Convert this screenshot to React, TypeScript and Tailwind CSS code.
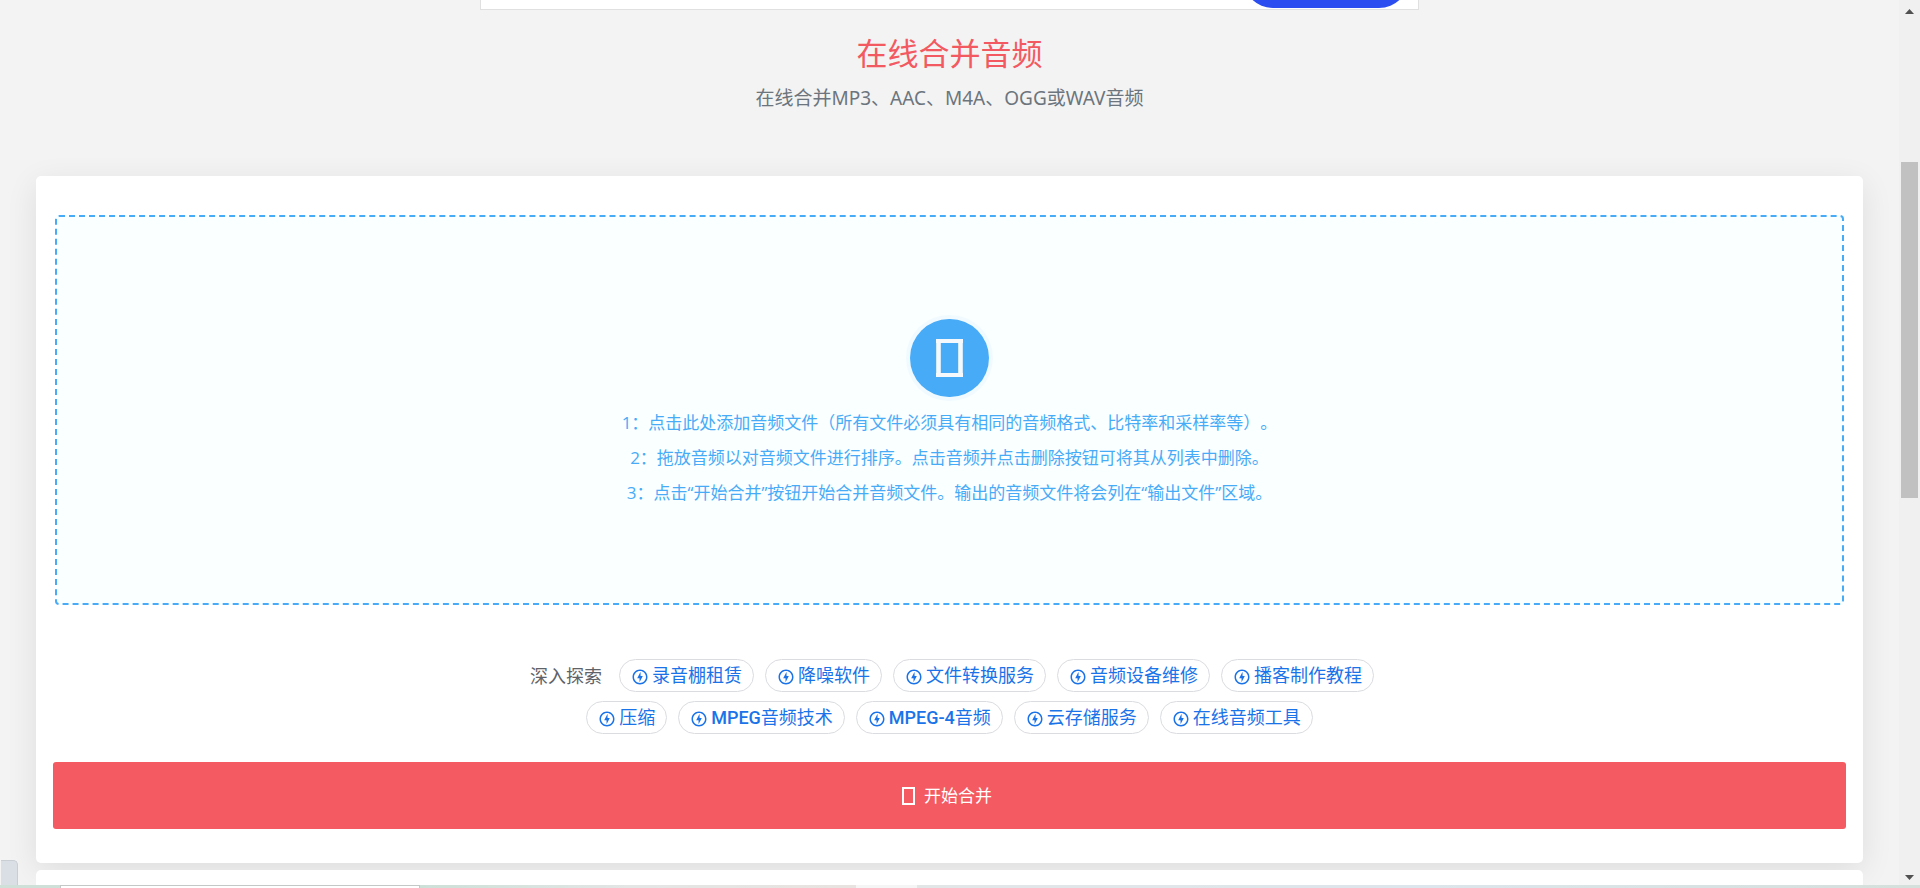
interface Topic {
  id: string;
  latin?: string;
  label: string;
}

const topicRows: Topic[][] = [
  [
    { id: "studio", label: "录音棚租赁" },
    { id: "denoise", label: "降噪软件" },
    { id: "convert", label: "文件转换服务" },
    { id: "repair", label: "音频设备维修" },
    { id: "podcast", label: "播客制作教程" },
  ],
  [
    { id: "compress", label: "压缩" },
    { id: "mpeg", latin: "MPEG", label: "音频技术" },
    { id: "mpeg4", latin: "MPEG-4", label: "音频" },
    { id: "cloud", label: "云存储服务" },
    { id: "tools", label: "在线音频工具" },
  ],
];

const steps = [
  "1：点击此处添加音频文件（所有文件必须具有相同的音频格式、比特率和采样率等）。",
  "2：拖放音频以对音频文件进行排序。点击音频并点击删除按钮可将其从列表中删除。",
  "3：点击“开始合并”按钮开始合并音频文件。输出的音频文件将会列在“输出文件”区域。",
];

function BoltIcon() {
  return (
    <svg viewBox="0 0 24 24" className="mt-0.5 h-[18px] w-[18px] shrink-0 fill-current" aria-hidden="true">
      <path d="M12 2.02c-5.51 0-9.98 4.47-9.98 9.98s4.47 9.98 9.98 9.98 9.98-4.47 9.98-9.98S17.51 2.02 12 2.02zm0 17.96c-4.4 0-7.98-3.58-7.98-7.98S7.6 4.02 12 4.02 19.98 7.6 19.98 12 16.4 19.98 12 19.98zM12.75 5l-4.5 8.5h3.14V19l4.36-8.5h-3z" />
    </svg>
  );
}

function TopicChip({ topic }: { topic: Topic }) {
  return (
    <a
      href={`#${topic.id}`}
      className="flex h-[33px] items-center gap-[3px] rounded-full border border-[#dadce0] px-[11px] font-['Roboto','Noto_Sans_CJK_SC',sans-serif] text-lg text-[#1a73e8]"
    >
      <BoltIcon />
      <span>
        {topic.latin && <span className="font-medium">{topic.latin}</span>}
        {topic.label}
      </span>
    </a>
  );
}

function Banner() {
  return (
    <div className="relative mx-auto h-[10px] w-[939px] shrink-0 overflow-hidden border border-t-0 border-[#e0e0e0] bg-white">
      <div className="absolute right-[9px] bottom-px h-[60px] w-[166px] rounded-[30px] bg-[#2c4ef0]" />
    </div>
  );
}

function DropZone() {
  return (
    <label className="mx-[19px] flex cursor-pointer flex-col items-center rounded border-2 border-dashed border-[#48abf7] bg-[#faffff] pt-[102px] pb-[93px] text-[17px] leading-[35px] text-[#48abf7] [text-spacing-trim:space-all]">
      <input type="file" multiple accept="audio/*" className="sr-only" />
      <span className="mb-2 flex h-[78px] w-[79px] items-center justify-center rounded-full bg-[#48abf7] shadow-[0_0_0_4px_#f1fbff]">
        <svg viewBox="0 0 27 38" className="h-[38px] w-[27px]" fill="none" stroke="#f6f9fc" aria-hidden="true">
          <path d="M0 2h27M0 36h27" strokeWidth="4" />
          <path d="M2.5 0v38M24.5 0v38" strokeWidth="4.6" />
        </svg>
      </span>
      {steps.map((step) => (
        <span key={step}>{step}</span>
      ))}
    </label>
  );
}

function Scrollbar() {
  return (
    <div className="flex w-[21px] shrink-0 flex-col items-center bg-[#f0f0f0] pt-[9px] pb-[5px]">
      <svg viewBox="0 0 9 5" className="h-[5px] w-[9px] fill-[#505050]" aria-hidden="true">
        <path d="M4.5 0 9 5H0z" />
      </svg>
      <div className="flex min-h-0 w-full flex-1 flex-col items-center">
        <div className="basis-[17.2%]" />
        <div className="w-[17px] basis-[39%] bg-[#c1c1c1]" />
      </div>
      <svg viewBox="0 0 9 5" className="h-[5px] w-[9px] fill-[#505050]" aria-hidden="true">
        <path d="M0 0h9L4.5 5z" />
      </svg>
    </div>
  );
}

function BottomStrip() {
  return (
    <div className="flex h-[3px] shrink-0">
      <div className="w-[60px] bg-[#cfe0d9]" />
      <div className="w-[360px] border border-b-0 border-[#c4c9c7] bg-white" />
      <div className="w-[436px] bg-linear-to-r from-[#cde0d8] via-[#e4e6e5] to-[#e8e3e0]" />
      <div className="w-[61px] bg-[#f5f5f5]" />
      <div className="flex-1 bg-linear-to-r from-[#e3e6e7] via-[#dde6ec] to-[#d5dfdb]" />
    </div>
  );
}

export default function App() {
  return (
    <div className="flex h-screen flex-col overflow-hidden bg-[#f3f3f3] font-['Open_Sans','Noto_Sans_CJK_SC',sans-serif]">
      <div className="flex min-h-0 flex-1">
        <main className="relative flex min-w-0 flex-1 flex-col overflow-hidden">
          <Banner />

          <header className="pt-[19px] pb-[63px] text-center">
            <h1 className="text-[31px] leading-[48px] text-[#f25961]">在线合并音频</h1>
            <p className="mt-[6px] font-['Noto_Sans','Noto_Sans_CJK_SC',sans-serif] text-[19px] leading-[30px] text-[#6c757d]">
              在线合并MP3、AAC、M4A、OGG或WAV音频
            </p>
          </header>

          <section className="mx-9 shrink-0 rounded-[5px] bg-white pt-[39px] pb-[34px] shadow-[0_8px_32px_rgba(0,0,0,0.09)]">
            <DropZone />

            <nav className="mt-[54px] flex flex-col items-center gap-[9px]">
              {topicRows.map((row, i) => (
                <div key={i} className="flex items-center gap-[11px]">
                  {i === 0 && <span className="mr-[6px] ml-[5px] text-lg text-[#5f6368]">深入探索</span>}
                  {row.map((topic) => (
                    <TopicChip key={topic.id} topic={topic} />
                  ))}
                </div>
              ))}
            </nav>

            <div className="mt-7 px-[17px]">
              <button
                type="button"
                className="flex h-[67px] w-full items-center justify-center gap-[9px] rounded-[3px] bg-[#f45a61] pr-[5px] text-[17px] text-white"
              >
                <svg viewBox="0 0 13 18" className="h-[18px] w-[13px]" fill="none" stroke="currentColor" aria-hidden="true">
                  <path d="M1 1h11v16H1z" strokeWidth="2" />
                </svg>
                开始合并
              </button>
            </div>
          </section>

          <section className="mx-9 mt-[7px] h-20 shrink-0 rounded-[5px] bg-white" />

          <div className="absolute bottom-0 left-px h-[25px] w-[17px] rounded-tr-[5px] border-t border-r border-[#c9ced4] bg-[#dadfe5]" />
        </main>
        <Scrollbar />
      </div>
      <BottomStrip />
    </div>
  );
}
